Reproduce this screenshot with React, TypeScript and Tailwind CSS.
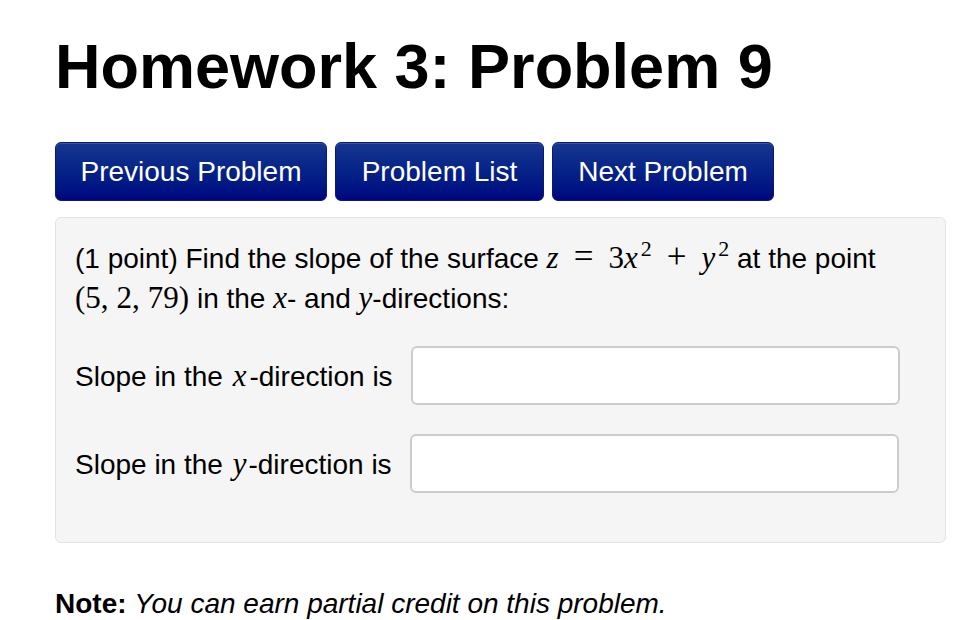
const sans = "font-['Liberation_Sans',Arial,Helvetica,sans-serif]";
const serif = "font-['Liberation_Serif','Times_New_Roman',serif]";

function V({ children }: { children: string }) {
  return <span className={`${serif} italic text-[31px]`}>{children}</span>;
}

function N({ children }: { children: string }) {
  return <span className={`${serif} text-[31px]`}>{children}</span>;
}

function Op({ children }: { children: string }) {
  return (
    <span className={`${serif} mx-[15px] text-[35px] leading-none`}>{children}</span>
  );
}

function Sq() {
  return (
    <sup className={`${serif} relative -top-[12px] ml-[3px] text-[22px]`}>2</sup>
  );
}

const buttonClass =
  "h-[59px] rounded-[6px] border border-[#0a1a6e] bg-gradient-to-b from-[#17358f] to-[#00047f] text-[28px] text-white shadow-[inset_0_1px_0_rgba(255,255,255,0.15)]";

const inputClass =
  "h-[59px] w-[489px] rounded-[6px] border-2 border-[#cccccc] bg-white px-3 text-[26px] outline-none";

export default function App() {
  return (
    <div className={`${sans} min-h-[620px] bg-white px-[55px] pt-[31px] text-black`}>
      <h1 className="text-[63px] font-bold leading-[70px]">
        Homework 3: Problem 9
      </h1>

      <div className="mt-[41px] flex gap-[8px]">
        <button type="button" className={`${buttonClass} w-[272px]`}>
          Previous Problem
        </button>
        <button type="button" className={`${buttonClass} w-[209px]`}>
          Problem List
        </button>
        <button type="button" className={`${buttonClass} w-[222px]`}>
          Next Problem
        </button>
      </div>

      <div className="mt-[16px] h-[326px] w-[891px] rounded-[6px] border border-[#e3e3e3] bg-[#f5f5f5] px-[19px] pt-[20px] text-[28px] leading-[39px]">
        <p>
          (1 point) Find the slope of the surface{" "}
          <span className="whitespace-nowrap">
            <V>z</V>
            <Op>=</Op>
            <N>3</N>
            <V>x</V>
            <Sq />
            <Op>+</Op>
            <V>y</V>
            <Sq />
          </span>{" "}
          at the point{" "}
          <span className="whitespace-nowrap">
            <N>(5,</N>
            <span className="ml-[8px]">
              <N>2,</N>
            </span>
            <span className="ml-[8px]">
              <N>79)</N>
            </span>
          </span>{" "}
          in the <V>x</V>- and <V>y</V>-directions:
        </p>

        <div className="mt-[28px] flex items-center gap-[18px]">
          <span>
            Slope in the{" "}
            <span className="ml-[2px] mr-[3px]">
              <V>x</V>
            </span>
            -direction is
          </span>
          <input type="text" className={inputClass} />
        </div>
        <div className="mt-[29px] flex items-center gap-[18px]">
          <span>
            Slope in the{" "}
            <span className="ml-[2px] mr-[2px]">
              <V>y</V>
            </span>
            -direction is
          </span>
          <input type="text" className={inputClass} />
        </div>
      </div>

      <p className="mt-[41px] text-[28px] leading-[39px]">
        <b>Note:</b> <i>You can earn partial credit on this problem.</i>
      </p>
    </div>
  );
}
